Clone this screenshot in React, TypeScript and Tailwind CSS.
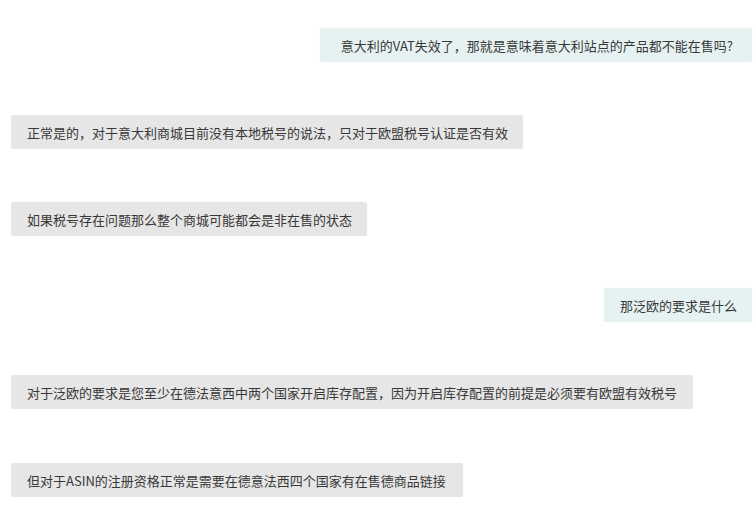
const messages = [
  { side: "right", top: "mt-[28px]", pad: "pl-[21px] pr-[19px]", text: "意大利的VAT失效了，那就是意味着意大利站点的产品都不能在售吗?" },
  { side: "left", top: "mt-[53px]", pad: "pl-4 pr-[15px]", text: "正常是的，对于意大利商城目前没有本地税号的说法，只对于欧盟税号认证是否有效" },
  { side: "left", top: "mt-[53px]", pad: "pl-4 pr-[15px]", text: "如果税号存在问题那么整个商城可能都会是非在售的状态" },
  { side: "right", top: "mt-[52px]", pad: "pl-4 pr-[15px]", text: "那泛欧的要求是什么" },
  { side: "left", top: "mt-[53px]", pad: "pl-4 pr-4", text: "对于泛欧的要求是您至少在德法意西中两个国家开启库存配置，因为开启库存配置的前提是必须要有欧盟有效税号" },
  { side: "left", top: "mt-[54px]", pad: "pl-4 pr-[17px]", text: "但对于ASIN的注册资格正常是需要在德意法西四个国家有在售德商品链接" },
];

export default function App() {
  return (
    <div
      className="flex h-[509px] w-[756px] flex-col overflow-hidden bg-white pl-[11px] pr-[4px] text-[#383838]"
      style={{ fontFamily: '"Noto Sans CJK SC", "Noto Sans", sans-serif' }}
    >
      {messages.map((m, i) => (
        <div key={i} className={`flex ${m.top} ${m.side === "right" ? "justify-end" : "justify-start"}`}>
          <div
            className={`flex h-[34px] items-center whitespace-nowrap rounded-[3px] ${m.pad} text-[13px] leading-none shadow-[0_0_1px_rgba(0,0,0,0.12)] ${
              m.side === "right" ? "bg-[#e6f2f1]" : "bg-[#e6e6e6]"
            }`}
          >
            {m.text}
          </div>
        </div>
      ))}
    </div>
  );
}
